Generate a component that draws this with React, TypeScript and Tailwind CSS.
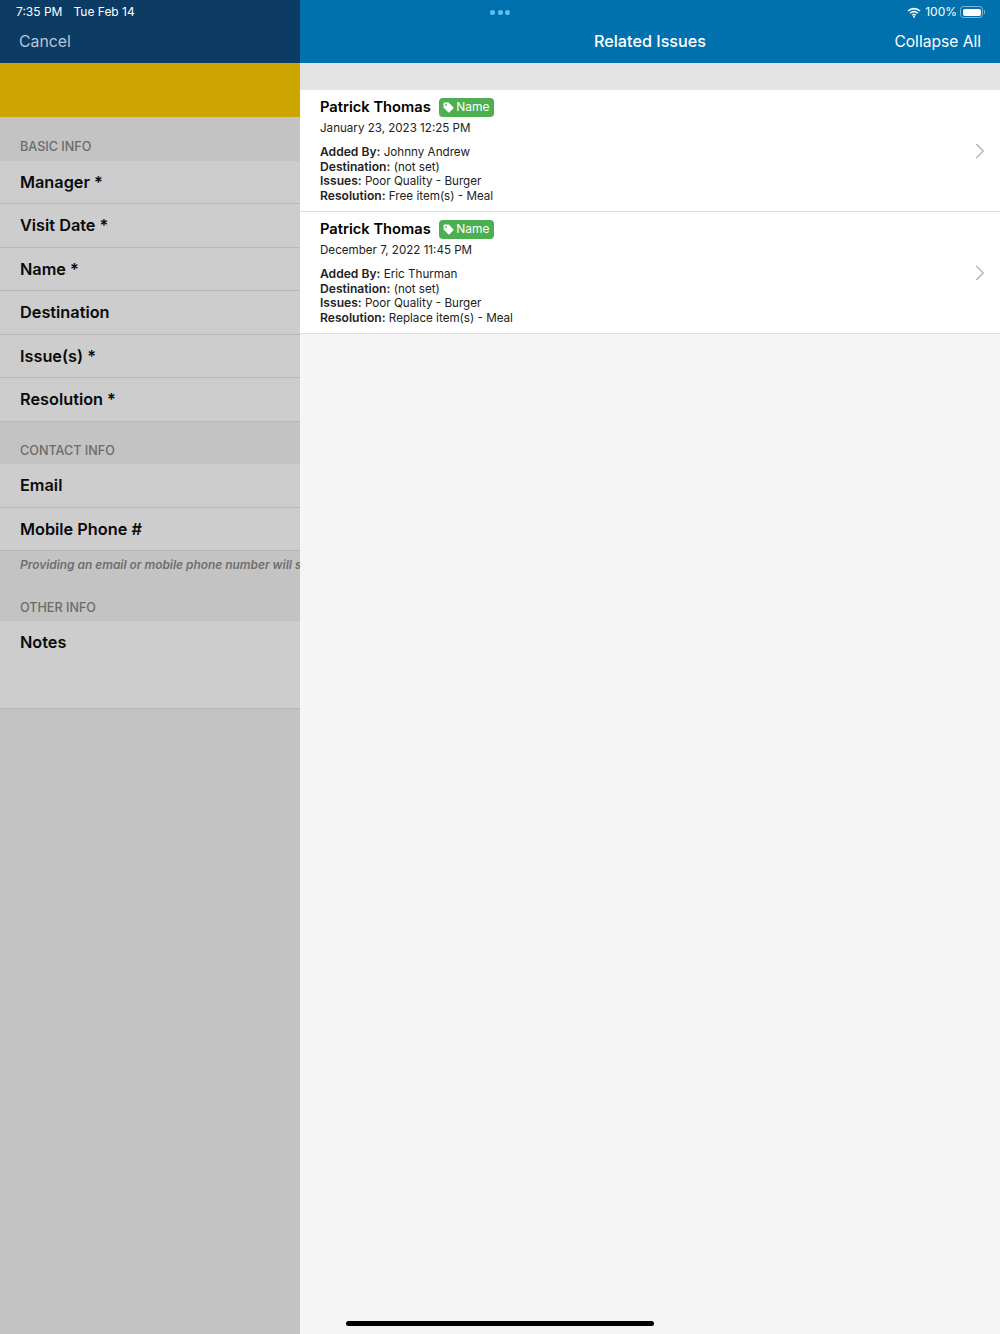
import { ChevronRight } from "lucide-react";

const font = { fontFamily: "Inter" };

function SectionLabel({ title, className }: { title: string; className: string }) {
  return (
    <div className={`flex items-end px-5 pb-[5.5px] text-[12.6px] leading-4 font-medium text-[#6b6b6b] ${className}`}>
      {title}
    </div>
  );
}

function FormRow({ label, tall }: { label: string; tall?: boolean }) {
  return (
    <div
      className={`border-b border-[#b7b7b7] bg-[#cdcdcd] px-5 pt-[10px] text-[16.3px] leading-[22px] font-semibold text-[#0a0a0a] ${
        tall ? "h-[88.3px]" : "h-[43.5px]"
      }`}
    >
      {label}
    </div>
  );
}

function TagIcon() {
  return (
    <svg width="11" height="11" viewBox="0 0 12 12" className="mr-[2px]">
      <path
        d="M0.6 1.6C0.6 1 1 0.6 1.6 0.6H5.6C5.9 0.6 6.2 0.7 6.4 0.9L11.2 5.7C11.6 6.1 11.6 6.7 11.2 7.1L7.1 11.2C6.7 11.6 6.1 11.6 5.7 11.2L0.9 6.4C0.7 6.2 0.6 5.9 0.6 5.6V1.6Z"
        fill="white"
      />
      <circle cx="3.2" cy="3.2" r="1" fill="#4caf50" />
    </svg>
  );
}

function Detail({ label, value }: { label: string; value: string }) {
  return (
    <div>
      <span className="text-[12.1px] font-semibold">{label}</span> {value}
    </div>
  );
}

type Issue = {
  date: string;
  addedBy: string;
  resolution: string;
};

function IssueCard({ issue }: { issue: Issue }) {
  return (
    <div className="flex h-[122px] items-center border-b border-[#dddddd] bg-white pr-[7px] pl-5">
      <div className="h-full flex-1 pt-[7px] text-black">
        <div className="flex h-5 items-center">
          <span className="text-[14.7px] leading-5 font-semibold">Patrick Thomas</span>
          <span className="ml-2 flex h-[19px] items-center rounded-[4px] bg-[#4caf50] px-[4.5px] text-[12px] text-white">
            <TagIcon />
            Name
          </span>
        </div>
        <div className="mt-[2.5px] text-[11.6px] leading-[17px] text-[#222222]">{issue.date}</div>
        <div className="mt-[8.5px] text-[11.65px] leading-[14.7px] text-[#222222]">
          <Detail label="Added By:" value={issue.addedBy} />
          <Detail label="Destination:" value="(not set)" />
          <Detail label="Issues:" value="Poor Quality - Burger" />
          <Detail label="Resolution:" value={issue.resolution} />
        </div>
      </div>
      <ChevronRight size={26} strokeWidth={1.5} className="text-[#b9b9b9]" />
    </div>
  );
}

export default function App() {
  const issues: Issue[] = [
    { date: "January 23, 2023 12:25 PM", addedBy: "Johnny Andrew", resolution: "Free item(s) - Meal" },
    { date: "December 7, 2022 11:45 PM", addedBy: "Eric Thurman", resolution: "Replace item(s) - Meal" },
  ];

  return (
    <div style={font} className="relative flex h-[1334px] w-[1000px] overflow-hidden">
      {/* Left pane, dimmed */}
      <div className="flex w-[300px] flex-col bg-[#c3c3c3]">
        <div className="h-[63px] bg-[#0c3b64] pl-4">
          <div className="flex h-6 items-center gap-[11px] text-[12px] text-white">
            <span>7:35 PM</span>
            <span>Tue Feb 14</span>
          </div>
          <div className="mt-[7px] pl-[3px] text-[15.8px] leading-[22px] text-[#b9c7d4]">Cancel</div>
        </div>
        <div className="h-[54px] bg-[#cca500]" />
        <div className="overflow-hidden">
          <SectionLabel title="BASIC INFO" className="h-[43.9px]" />
          <FormRow label="Manager *" />
          <FormRow label="Visit Date *" />
          <FormRow label="Name *" />
          <FormRow label="Destination" />
          <FormRow label="Issue(s) *" />
          <FormRow label="Resolution *" />
          <SectionLabel title="CONTACT INFO" className="h-[42.3px]" />
          <FormRow label="Email" />
          <FormRow label="Mobile Phone #" />
          <div className="h-[26.6px] px-5 pt-[6px] text-[11.9px] leading-4 font-semibold whitespace-nowrap text-[#6f6f6f] italic">
            Providing an email or mobile phone number will send a follow up
          </div>
          <SectionLabel title="OTHER INFO" className="h-[43.3px]" />
          <FormRow label="Notes" tall />
        </div>
      </div>

      {/* Right pane */}
      <div className="flex w-[700px] flex-col bg-[#f5f5f5]">
        <div className="h-[63px] bg-[#0071ac] text-white">
          <div className="flex h-6 items-center justify-end pr-[15px] text-[12px]">
            <svg width="14" height="11" viewBox="0 0 14 11" className="mr-[4px]" fill="none" stroke="white">
              <path d="M1 4C4.5 .7 9.5 .7 13 4" strokeWidth="1.7" />
              <path d="M3.2 6.2C5.5 4.2 8.5 4.2 10.8 6.2" strokeWidth="1.6" />
              <path d="M5.3 8.2C6.3 7.5 7.7 7.5 8.7 8.2" strokeWidth="1.5" />
              <circle cx="7" cy="9.8" r="1" fill="white" stroke="none" />
            </svg>
            <span>100%</span>
            <div className="ml-[3px] flex h-3 w-[23px] items-center rounded-[3.5px] border border-[#7fb8d5] p-[1.5px]">
              <div className="h-full w-full rounded-[2px] bg-white" />
            </div>
            <div className="ml-px h-1 w-px rounded-r bg-[#7fb8d5]" />
          </div>
          <div className="mt-[6px] flex items-start justify-between pr-[19px] pl-[294px] leading-[22px]">
            <span className="text-[16.2px] font-medium">Related Issues</span>
            <span className="pt-px text-[15.6px]">Collapse All</span>
          </div>
        </div>
        <div className="h-[27px] bg-[#e4e4e4]" />
        {issues.map((issue) => (
          <IssueCard key={issue.date} issue={issue} />
        ))}
      </div>

      {/* Multitasking dots */}
      <div className="absolute top-[10px] left-[490px] flex gap-[2.5px]">
        <div className="size-[5px] rounded-full bg-[#5cc0f5]" />
        <div className="size-[5px] rounded-full bg-[#5cc0f5]" />
        <div className="size-[5px] rounded-full bg-[#5cc0f5]" />
      </div>
      {/* Home indicator */}
      <div className="absolute top-[1321px] left-[346px] h-[5px] w-[308px] rounded-full bg-black" />
    </div>
  );
}
